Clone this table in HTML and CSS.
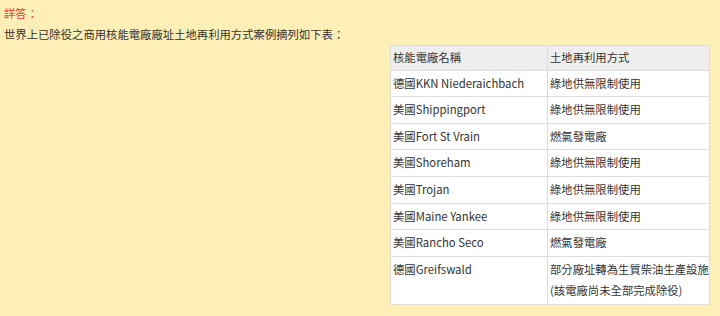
FILE: index.html
```html
<!DOCTYPE html>
<html lang="zh-Hant">
<head>
<meta charset="utf-8">
<link rel="stylesheet" href="styles.css">
</head>
<body>
<div class="answer">
  <div class="label">詳答：</div>
  <div class="intro">世界上已除役之商用核能電廠廠址土地再利用方式案例摘列如下表：</div>
  <table class="cases">
    <thead>
      <tr><th class="c1">核能電廠名稱</th><th class="c2">土地再利用方式</th></tr>
    </thead>
    <tbody>
      <tr><td>德國KKN Niederaichbach</td><td>綠地供無限制使用</td></tr>
      <tr><td>美國Shippingport</td><td>綠地供無限制使用</td></tr>
      <tr><td>美國Fort St Vrain</td><td>燃氣發電廠</td></tr>
      <tr><td>美國Shoreham</td><td>綠地供無限制使用</td></tr>
      <tr><td>美國Trojan</td><td>綠地供無限制使用</td></tr>
      <tr><td>美國Maine Yankee</td><td>綠地供無限制使用</td></tr>
      <tr><td>美國Rancho Seco</td><td>燃氣發電廠</td></tr>
      <tr><td>德國Greifswald</td><td>部分廠址轉為生質柴油生產設施<br>(該電廠尚未全部完成除役)</td></tr>
    </tbody>
  </table>
</div>
</body>
</html>
```
FILE: styles.css
```css
html, body {
  margin: 0;
  padding: 0;
  background: #fdefb6;
}
body {
  font-family: "Noto Sans CJK TC", "Noto Sans", sans-serif;
  font-size: 11.35px;
  color: #333;
}
.answer {
  padding: 3px 10px 0 4px;
  line-height: 21px;
}
.label {
  color: #ef3b2d;
}
.cases {
  margin-left: auto;
  width: 320px;
  table-layout: fixed;
  border-collapse: collapse;
  background: #fff;
  border: 1px solid #d6d6d6;
  line-height: 21.6px;
}
.cases th, .cases td {
  border: 1px solid #dcdcdc;
  padding: 2px 0 2px 2px;
  text-align: left;
  vertical-align: top;
  font-weight: normal;
  white-space: nowrap;
}
.cases th {
  background: #eeeeee;
  padding: 1px 0 1px 2px;
}
.cases .c1 { width: 154px; }
```
